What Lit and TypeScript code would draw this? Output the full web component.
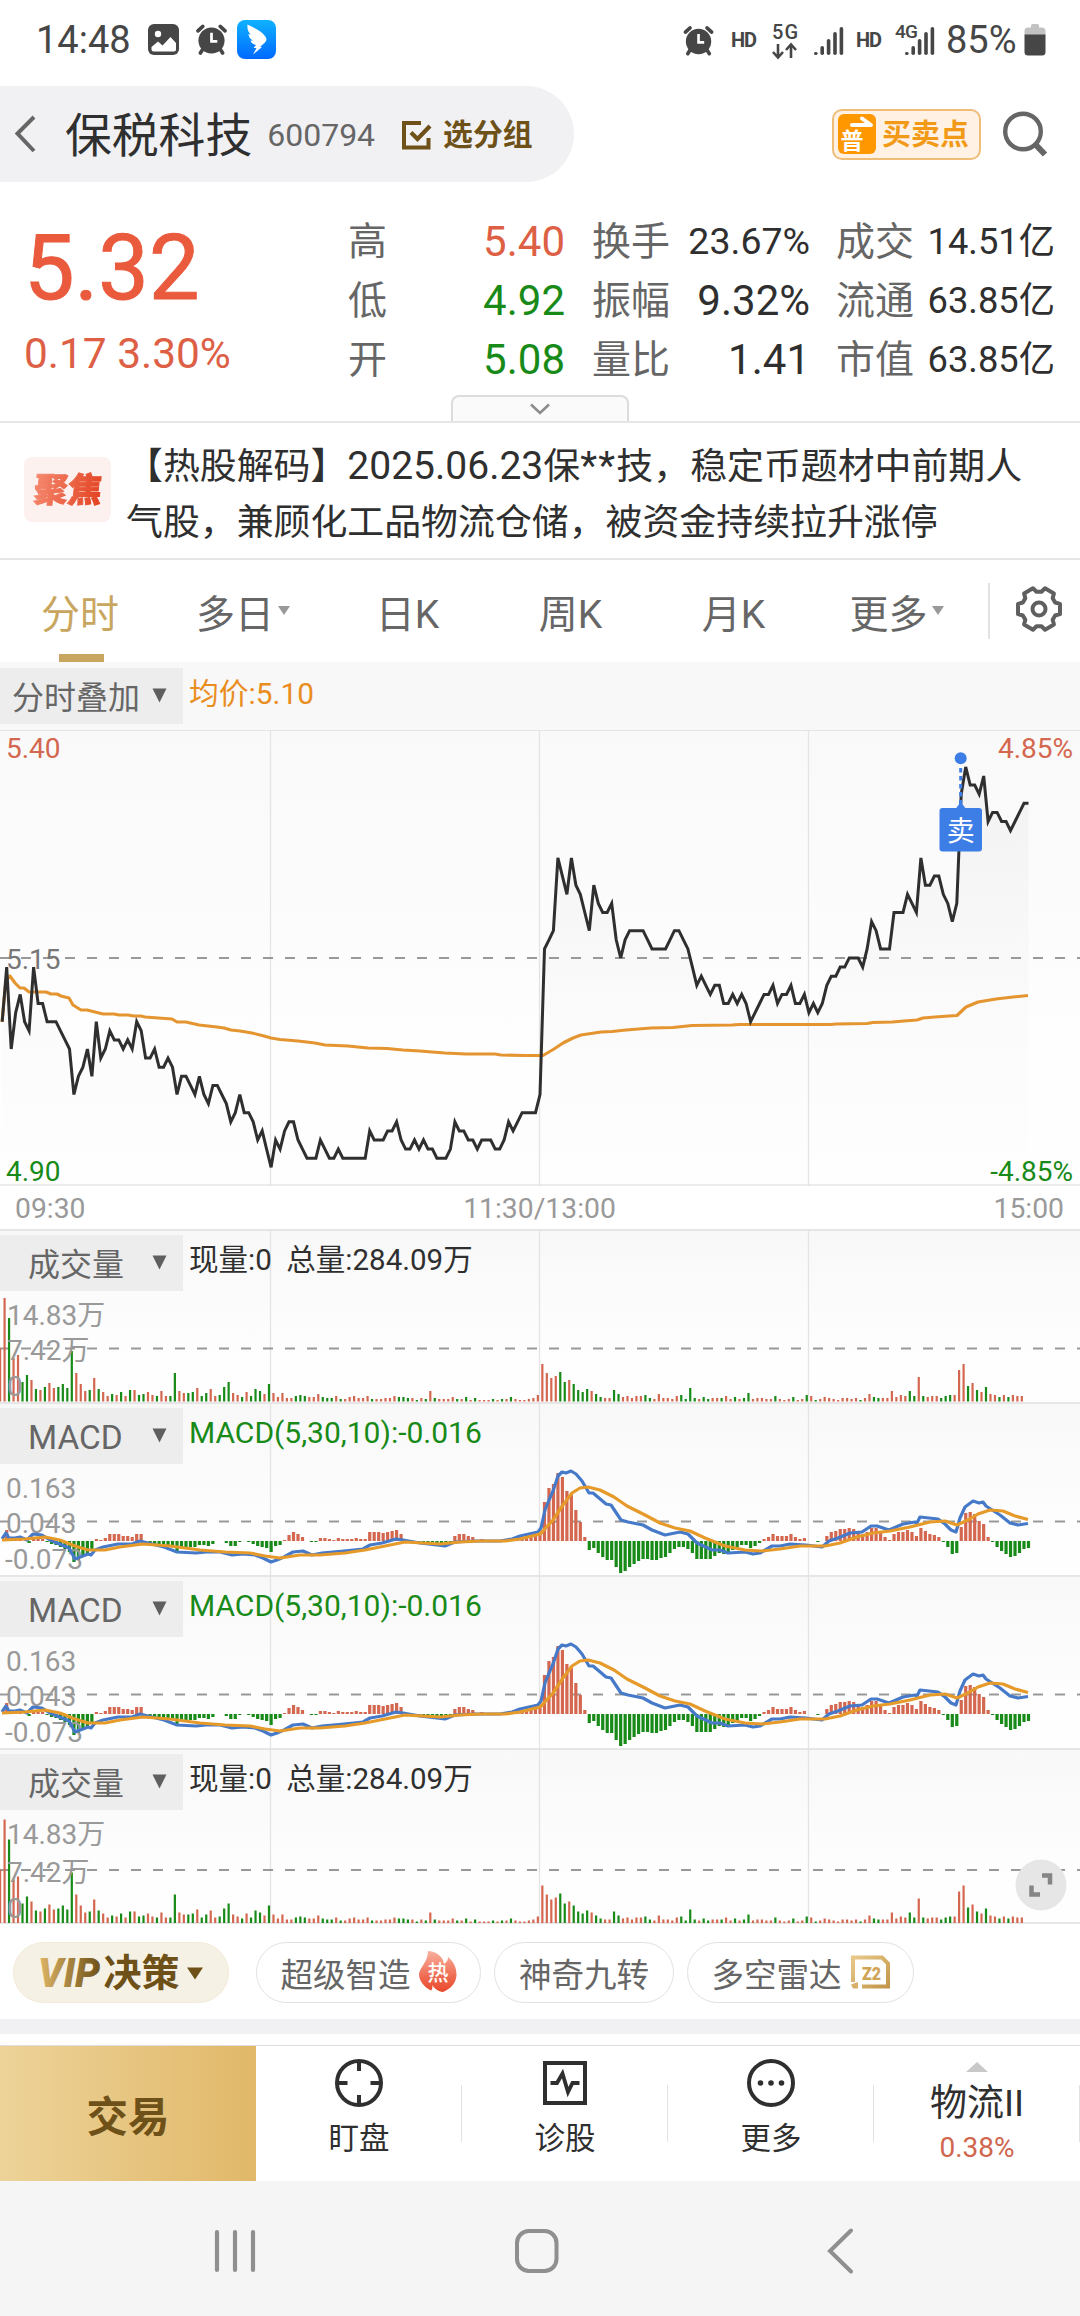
import { LitElement, html, css, svg } from "lit";
import { customElement, property } from "lit/decorators.js";

const SLOTS = 241;
const STEP = 1080 / SLOTS;
const GRID_X = [270.5, 539.5, 808.5];
const RED = "#d4674f";
const GREEN = "#188a18";

// Minute closes, in ticks of 0.01 from the previous close of 5.15.
const PRICE: number[] = [
  -7, -1, -10, -6, -4, -7, -8, -1, -5, -5, -7, -7, -7, -8, -9, -10, -15, -13, -12, -10,
  -13, -7, -11, -10, -8, -9, -9, -10, -9, -10, -7, -8, -11, -11, -10, -12, -12, -11, -12, -15,
  -13, -13, -14, -15, -13, -15, -16, -14, -14, -15, -16, -18, -17, -15, -17, -17, -18, -20, -19, -21,
  -23, -20, -21, -19, -18, -18, -20, -21, -22, -22, -22, -20, -21, -22, -22, -21, -22, -22, -22, -22,
  -22, -22, -19, -20, -20, -20, -19, -19, -18, -20, -21, -21, -20, -21, -20, -21, -21, -22, -22, -22,
  -21, -18, -19, -19, -20, -20, -21, -20, -20, -20, -21, -21, -20, -18, -19, -18, -17, -17, -17, -17,
  -15, 1, 2, 3, 11, 9, 7, 11, 8, 7, 5, 3, 8, 6, 5, 5, 6, 2, 0, 2,
  3, 3, 3, 3, 2, 1, 1, 1, 1, 2, 3, 3, 2, 1, -1, -3, -2, -3, -4, -3,
  -3, -5, -5, -4, -5, -4, -5, -7, -6, -5, -4, -4, -3, -5, -4, -4, -3, -5, -5, -4,
  -6, -5, -6, -5, -3, -2, -2, -1, -1, 0, 0, 0, -1, 1, 4, 3, 1, 1, 1, 5,
  5, 5, 7, 6, 5, 11, 8, 8, 9, 9, 7, 6, 4, 6, 18, 21, 19, 19, 18, 20,
  15, 16, 16, 15, 15, 14, 15, 16, 17, 17,
];

const AVERAGE =
  "2,292 6,250 10,246 15,253 20,258 24,258 29,262 46,262 51,264 57,264 61,266 69,268 73,275 81,280 87,280 103,284 114,284 119,285 128,285 134,286 141,286 145,287 172,289 177,292 186,292 199,295 217,297 224,298 231,300 240,301 252,303 264,306 271,308 280,309.5 298,311 315,313 325,315 348,316 368,318 387,318.5 403,320 420,321 432,322 445,323 466,324 495,324 501,325 525,325.5 543,325.5 554,319 563,313 573,308 581,305 601,302 612,301.5 626,300 651,298 673,297.5 692,295.5 732,295 739,294.5 831,294.5 836,294 867,293.5 873,292.5 892,292 904,291 917,290 923,288 935,287 949,286 957,285.5 966,277 978,272 996,269 1013,267 1028,265.5";

const VOLUME =
  "53r 103r 83g 43r 46r 19g 26g 21r 12g 11r 14g 18r 13r 14g 17g 13g 50g 28r 17r 10r 11g 23r 12g 9r 5r 7g 6r 9g 5r 11g 11r 6g 7g 9r 6r 5g 10r 5r 5g 28g 10r 8r 8g 9g 13r 5g 8g 12r 5r 6g 14g 19g 8r 6r 4g 9r 5g 12g 10g 7r 17g 8r 4r 8r 3r 3r 5g 6g 5g 4r 4r 7r 4g 3g 3g 5r 2g 2r 4r 5r 3r 3r 5r 2g 2r 2r 3r 3r 5r 4g 4g 3g 3r 1g 3r 2g 10r 3g 2r 2r 2r 4r 2g 2r 4g 1r 3g 1r 1r 1r 2g 1r 2g 2r 4g 2r 1r 1r 2r 3r 6r 37r 28r 23r 25r 29g 19g 21r 17g 11g 9g 12g 10r 7g 4g 3r 3r 11g 7g 4r 5r 3r 5r 5r 6g 3g 2r 7r 3r 3r 2r 5r 6g 2g 13g 3g 2r 4g 2g 3r 3r 3g 5r 2r 4g 2r 3g 8g 2r 3r 3r 2r 2r 5g 2r 1r 2r 4g 1r 2r 6g 5r 1g 2r 4r 3r 2r 1r 3r 3r 2r 3r 1g 3r 7r 4g 3g 3r 3r 10r 4r 6r 5r 10g 5g 24r 5g 4r 5r 5r 3g 5g 6g 6r 31r 37r 15g 18r 11g 9r 14g 7r 6r 4g 6r 4g 6r 5r 5r"
    .split(" ");

const HIST: number[] = [
  0, 11, 0, 1, 2, 0, -2, 4, 3, 2, -1, -3, -4, -6, -8, -11, -21, -19, -16, -12,
  -8, 2, 1, 3, 7, 7, 7, 5, 5, 4, 7, 7, 0, -2, -3, -5, -5, -5, -5, -11,
  -7, -6, -6, -6, -4, -4, -5, -3, 0, 0, -2, -5, -5, -1, 0, -1, -3, -5, -6, -7,
  -11, -5, -4, 1, 6, 9, 7, 4, 0, -1, -1, 3, 3, 2, 1, 3, 2, 2, 2, 3,
  2, 2, 9, 9, 9, 8, 9, 10, 11, 7, 1, 0, -1, -1, -1, -1, -1, -2, -2, -2,
  -1, 5, 7, 7, 5, 4, 1, 2, 1, 1, 0, 0, 0, 0, 1, 2, 4, 4, 5, 6,
  8, 39, 53, 57, 68, 64, 50, 46, 31, 19, 4, -9, -7, -12, -16, -19, -19, -26, -32, -30,
  -26, -23, -20, -18, -18, -19, -19, -17, -16, -12, -8, -6, -6, -8, -12, -18, -18, -18, -18, -15,
  -12, -13, -11, -9, -7, -4, -4, -7, -5, -2, 2, 4, 7, 5, 5, 5, 7, 4, 2, 3,
  0, 0, -1, 0, 5, 9, 10, 12, 12, 13, 12, 9, 7, 9, 13, 13, 8, 4, 1, 7,
  9, 9, 11, 9, 5, 13, 10, 7, 6, 4, -1, -6, -13, -12, 14, 28, 29, 27, 20, 17,
  4, -1, -6, -10, -13, -16, -15, -12, -8, -7,
];

const DIF =
  "2,137 6,131 9,136 15,136 20,135 27,138 33,132 42,133 50,138 62,143 69,146 75,157 83,154 88,152 91,153 95,148 103,145 118,142 132,142 140,139 152,142 164,145 177,150 196,151 206,150 220,150 232,153 243,152 255,153 263,156 271,160 277,158 284,155 293,150 303,149 312,153 322,151 344,149 363,147 370,143 382,141 396,137 403,138 420,141 445,144 455,140 475,139 500,139 512,137 520,134 538,130 541,126 545,108 549,98 553,89 558,74 562,70 566,71 571,69 576,72 582,79 589,91 593,91 599,96 606,102 611,103 621,118 628,120 643,123 652,128 665,133 680,130 688,132 697,141 712,148 720,148 728,151 745,150 753,152 760,151 772,144 780,144 790,142 806,143 822,145 829,139 838,136 850,131 862,130 865,128 871,124 877,124 889,128 903,122 915,120 917,121 920,115 938,117 945,122 951,128 956,130 960,116 965,105 973,99 979,101 983,100 986,104 1000,113 1010,121 1018,123 1028,121.5";

const DEA =
  "2,138 25,137 45,135 60,138 75,144 88,148 105,148 120,145 143,142 170,144 200,148 225,150 250,151 265,154 280,156 300,153 320,153 345,151 365,148 385,144 405,140 440,142 460,140 480,139 505,139 520,137 540,132 543,129 553,118 563,103 572,91 580,86 588,85 600,88 614,95 627,104 645,113 660,121 675,126 690,129 705,136 725,144 745,148 762,149 780,147 800,144 825,144 840,141 857,135 873,131 890,129 910,125 930,120 945,119 957,123 968,118 978,112 990,108 1003,109 1015,114 1028,117.5";

const vGrid = (h: number) =>
  GRID_X.map((x) => svg`<line x1=${x} x2=${x} y1="0" y2=${h} stroke="#e4e4e4" stroke-width="1.3"/>`);
const dashes = (y: number) =>
  svg`<line x1="-1" x2="1080" y1=${y} y2=${y} stroke="#999" stroke-width="2" stroke-dasharray="10 12"/>`;
const label = (x: number, cy: number, text: string, fill: string, anchor = "start") =>
  svg`<text x=${x} y=${cy + 9.5} fill=${fill} text-anchor=${anchor}>${text}</text>`;

const FONT = css`
  :host {
    font-family: Roboto, "Noto Sans CJK SC", sans-serif;
  }
  svg {
    display: block;
    overflow: visible;
  }
  svg text {
    font-family: Roboto, "Noto Sans CJK SC", sans-serif;
  }
`;

@customElement("status-bar")
class StatusBar extends LitElement {
  static styles = [FONT, css`
    :host {
      display: flex;
      align-items: center;
      box-sizing: border-box;
      height: 78px;
      padding: 1px 34px 0 36px;
      color: #464646;
      font-size: 38px;
    }
    .image { margin-left: 17px; }
    .alarm { margin-left: 17px; }
    .wing { margin-left: 10px; }
    .cluster { margin-left: auto; }
    .percent { margin-left: 12px; width: 71px; }
    .battery { margin-left: 7px; }
  `];

  private alarm() {
    return svg`
      <circle cx="16" cy="17" r="13.5" fill="#464646"/>
      <path d="M2 7L7 2.5M30 7L25 2.5M7 26L4.5 30M25 26L27.5 30" stroke="#464646" stroke-width="3.8" stroke-linecap="round"/>
      <path d="M16 9V18H22" fill="none" stroke="#fff" stroke-width="2.8"/>`;
  }

  private signal(x: number) {
    return [3, 9, 16, 23, 28].map(
      (h, i) => svg`<rect x=${x + i * 6.4} y=${54 - h} width="3.6" height=${h} rx="1.8"/>`,
    );
  }

  render() {
    return html`
      <span>14:48</span>
      <svg class="image" width="31" height="31" viewBox="0 0 31 31">
        <rect width="31" height="31" rx="6" fill="#464646"/>
        <circle cx="10" cy="10" r="3.2" fill="#fff"/>
        <path d="M3.5 23L10 17.5L14.5 21.5L22.5 13L28 19V25.5Q28 27.5 26 27.5H5.5Q3.5 27.5 3.5 25.5Z" fill="#fff"/>
      </svg>
      <svg class="alarm" width="31" height="31" viewBox="0 0 32 32">${this.alarm()}</svg>
      <svg class="wing" width="39" height="39" viewBox="0 0 39 39">
        <defs><linearGradient id="w" x2="0" y2="1"><stop stop-color="#0fb2ff"/><stop offset="1" stop-color="#0069ff"/></linearGradient></defs>
        <rect width="39" height="39" rx="8" fill="url(#w)"/>
        <path d="M10.5 4.500C16 7.500 24 10.500 27.500 15.500C30 18.500 30 20 28 22.500L23 27H25L16 34.500L19.500 28H16.500L19 25C15.500 24.500 14 22.500 13.500 20.500L16 20.500C13 19 11.500 16.500 11.500 14L14 14.500C11 12 10 8.500 10.500 4.500Z" fill="#fff"/>
      </svg>
      <svg class="cluster" width="250" height="78" viewBox="684 0 250 78" fill="#464646">
        <g transform="translate(683.5 24.5) scale(.94)">${this.alarm()}</g>
        <text x="731" y="46" font-size="20" font-weight="700" textLength="26">HD</text>
        <text x="772" y="38" font-size="20" font-weight="500" textLength="26">5G</text>
        <path d="M778 43V56M773 51L778 56.5L783 51M791 57V44M786 49L791 43.5L796 49" fill="none" stroke="#464646" stroke-width="2.6"/>
        ${this.signal(814)}
        <text x="856" y="46" font-size="20" font-weight="700" textLength="26">HD</text>
        <text x="895" y="37" font-size="19" font-weight="500" textLength="23">4G</text>
        ${this.signal(905)}
      </svg>
      <span class="percent">85%</span>
      <svg class="battery" width="22" height="32" viewBox="0 0 22 32">
        <path d="M7 1.5Q7 0 8.500 0H13.500Q15 0 15 1.500V3.500H18Q21.500 3.500 21.500 7V11H.5V7Q.5 3.500 4 3.500H7Z" fill="#c2c2c2"/>
        <path d="M.5 10.5H21.500V28Q21.500 31.500 18 31.500H4Q.5 31.500 .5 28Z" fill="#464646"/>
      </svg>`;
  }
}

@customElement("stock-header")
class StockHeader extends LitElement {
  static styles = [FONT, css`
    :host {
      display: flex;
      align-items: center;
      height: 112px;
    }
    .pill {
      display: flex;
      align-items: center;
      box-sizing: border-box;
      width: 574px;
      height: 96px;
      padding-left: 12px;
      border-radius: 0 48px 48px 0;
      background: #f1f1f4;
    }
    .name { margin: 3px 0 0 28px; font-size: 46.800px; color: #2f2f2f; line-height: 60px; }
    .code { margin: 1px 0 0 15px; font-size: 32px; color: #666; }
    .check { margin: 3px 11px 0 27px; }
    .group { margin-top: 2px; font-size: 29.800px; font-weight: 700; color: #6e5118; line-height: 40px; }
    .badge {
      display: flex;
      align-items: center;
      box-sizing: border-box;
      width: 149px;
      height: 51px;
      margin-left: 258px;
      padding-left: 4px;
      border: 2px solid #eebd78;
      border-radius: 10px;
      background: #fff2e4;
      color: #f29a17;
      font-size: 29px;
      font-weight: 700;
    }
    .badge span { margin: 2px 0 0 6px; line-height: 40px; }
    .search { margin-left: 20px; }
  `];

  render() {
    return html`
      <div class="pill">
        <svg width="25" height="40" viewBox="0 0 25 40"><path d="M22 3L5.5 19.5L22 37" fill="none" stroke="#666" stroke-width="4"/></svg>
        <span class="name">保税科技</span>
        <span class="code">600794</span>
        <svg class="check" width="30" height="29" viewBox="0 0 30 29" fill="none" stroke="#6e5118">
          <path d="M19 2H2V26.5H26.5V17" stroke-width="4"/>
          <path d="M9 11.5L15.5 18L28 5" stroke-width="4.2"/>
        </svg>
        <span class="group">选分组</span>
      </div>
      <div class="badge">
        <svg width="38" height="40" viewBox="0 0 38 40">
          <rect width="38" height="40" rx="6" fill="#ff9800"/>
          <path d="M14 11H33L24 4.5" fill="none" stroke="#fff" stroke-width="4" stroke-linejoin="round" stroke-linecap="round"/>
          <text x="2.5" y="35" font-size="23" font-weight="700" fill="#fff">普</text>
        </svg>
        <span>买卖点</span>
      </div>
      <svg class="search" width="48" height="48" viewBox="0 0 48 48" fill="none" stroke="#666">
        <circle cx="22" cy="21.5" r="17.8" stroke-width="4.4"/>
        <path d="M34 34L44 44.5" stroke-width="6"/>
      </svg>`;
  }
}

@customElement("quote-summary")
class QuoteSummary extends LitElement {
  static styles = [FONT, css`
    :host {
      display: flex;
      position: relative;
      box-sizing: border-box;
      height: 233px;
      padding-top: 22px;
      border-bottom: 2px solid #e6e6e6;
    }
    .left { width: 348px; color: #ea5a3d; }
    .last { padding: 13px 0 0 24px; font-size: 90px; line-height: 88px; -webkit-text-stroke: 1px #ea5a3d; }
    .change { padding: 15px 0 0 24px; font-size: 42.400px; line-height: 52px; color: #dd6045; white-space: nowrap; }
    .stats {
      display: grid;
      grid-template-columns: 38px 179px 105px 140px 104px 141px;
      grid-auto-rows: 59px;
      align-items: center;
      line-height: 59px;
      font-size: 42px;
      color: #2f2f2f;
    }
    .stats span { white-space: nowrap; }
    .k { font-size: 39px; color: #666; text-align: right; padding-top: 1px; }
    .v { text-align: right; }
    .up { color: #dd6045; }
    .down { color: #188a18; }
    .mid { font-size: 37.500px; }
    .small { font-size: 36.300px; }
    .toggle {
      position: absolute;
      left: 451px;
      bottom: 0;
      display: flex;
      align-items: center;
      justify-content: center;
      box-sizing: border-box;
      width: 178px;
      height: 26px;
      border: 2px solid #dcdcdc;
      border-bottom: 0;
      border-radius: 8px 8px 0 0;
      background: #fafafa;
    }
  `];

  private rows = [
    ["高", "5.40", "up", "换手", "23.67%", "mid", "成交", "14.51亿"],
    ["低", "4.92", "down", "振幅", "9.32%", "", "流通", "63.85亿"],
    ["开", "5.08", "down", "量比", "1.41", "", "市值", "63.85亿"],
  ];

  render() {
    return html`
      <div class="left">
        <div class="last">5.32</div>
        <div class="change">0.17 3.30%</div>
      </div>
      <div class="stats">
        ${this.rows.map((r) => html`
          <span class="k">${r[0]}</span><span class="v ${r[2]}">${r[1]}</span>
          <span class="k">${r[3]}</span><span class="v ${r[5]}">${r[4]}</span>
          <span class="k">${r[6]}</span><span class="v small">${r[7]}</span>`)}
      </div>
      <div class="toggle">
        <svg width="22" height="12" viewBox="0 0 22 12"><path d="M2 1.5L11 10L20 1.5" fill="none" stroke="#8c8c8c" stroke-width="2.6"/></svg>
      </div>`;
  }
}

@customElement("news-line")
class NewsLine extends LitElement {
  static styles = [FONT, css`
    :host {
      display: flex;
      box-sizing: border-box;
      height: 137px;
      padding: 16px 0 0 24px;
      border-bottom: 2px solid #e6e6e6;
    }
    .tag {
      display: grid;
      place-items: center;
      width: 87px;
      height: 65px;
      margin: 18px 15px 0 0;
      border-radius: 8px;
      background: #fdf1ef;
    }
    .tag span {
      font-size: 34px;
      font-weight: 900;
      line-height: 44px;
      transform: skewX(-6deg);
      background: linear-gradient(100deg, #f58a70, #e2401f);
      -webkit-background-clip: text;
      color: transparent;
      -webkit-text-stroke: 1px transparent;
    }
    .text { font-size: 36.900px; line-height: 56px; color: #2f2f2f; white-space: nowrap; }
    .date { font-size: 39px; line-height: 1; }
    .mask { font-size: 39px; line-height: 1; letter-spacing: 1.300px; }
  `];

  render() {
    return html`
      <div class="tag"><span>聚焦</span></div>
      <div class="text">【热股解码】<span class="date">2025.06.23</span>保<span class="mask">**</span>技，稳定币题材中前期人<br>气股，兼顾化工品物流仓储，被资金持续拉升涨停</div>`;
  }
}

@customElement("period-tabs")
class PeriodTabs extends LitElement {
  static styles = [FONT, css`
    :host { display: flex; height: 102px; background: #fff; }
    .tab {
      display: flex;
      align-items: center;
      justify-content: center;
      position: relative;
      width: 163px;
      height: 102px;
      padding-bottom: 1px;
      box-sizing: border-box;
      font-size: 39px;
      color: #666;
    }
    .tab svg { margin: 0 0 0 4px; }
    .active { color: #c9a660; }
    .tab:nth-child(-n + 2) { padding-right: 3px; }
    .active::after {
      content: "";
      position: absolute;
      left: 59px;
      top: 94px;
      width: 45px;
      height: 8px;
      background: #c9a660;
    }
    .settings {
      display: flex;
      align-items: center;
      box-sizing: border-box;
      height: 56px;
      margin: 23px 0 0 10px;
      padding: 0 0 5px 25px;
      border-left: 2px solid #e2e2e2;
    }
  `];

  private gear() {
    const pts: string[] = [];
    for (let i = 0; i < 6; i++) {
      const a = (i * Math.PI) / 3;
      for (const [d, r] of [[-0.38, 17.4], [-0.24, 21.6], [0.24, 21.6], [0.38, 17.4]]) {
        pts.push(`${(24 + r * Math.cos(a + d)).toFixed(2)},${(24 + r * Math.sin(a + d)).toFixed(2)}`);
      }
    }
    return pts.join(" ");
  }

  render() {
    const tabs = ["分时", "多日", "日K", "周K", "月K", "更多"];
    return html`
      ${tabs.map((t, i) => html`<div class="tab ${i === 0 ? "active" : ""}">${t}${i === 1 || i === 5
        ? html`<svg width="12" height="9" viewBox="0 0 12 9"><path d="M0 0H12L6 9Z" fill="#999"/></svg>`
        : ""}</div>`)}
      <div class="settings">
        <svg width="48" height="48" viewBox="0 0 48 48" fill="none" stroke="#5f5f5f" stroke-width="4" stroke-linejoin="round">
          <polygon points=${this.gear()}/>
          <circle cx="24" cy="24" r="6.5"/>
        </svg>
      </div>`;
  }
}

const PANEL_HEAD = css`
  .head { display: flex; position: relative; }
  .pick {
    display: flex;
    align-items: center;
    justify-content: space-between;
    box-sizing: border-box;
    width: 183px;
    height: 56px;
    padding: 0 16px 0 28px;
    background: #ededed;
    color: #666;
    font-size: 32px;
  }
  .pick svg { margin-top: -2px; }
  .info { margin-left: 6px; font-size: 29.500px; line-height: 50px; white-space: pre; }
`;

const caret = html`<svg width="15" height="15" viewBox="0 0 15 15"><path d="M.5 .5H14.5L7.5 14.5Z" fill="#5f5f5f"/></svg>`;

@customElement("price-panel")
class PricePanel extends LitElement {
  static styles = [FONT, PANEL_HEAD, css`
    :host { display: flex; flex-direction: column; background: #f8f8f8; }
    .head { box-sizing: border-box; height: 68px; padding-top: 6px; }
    .pick { padding-left: 12px; }
    .pick span { margin-bottom: 2px; }
    .info { color: #ea8d1f; font-size: 29.800px; line-height: 51px; }
    .plot { height: 456px; background: linear-gradient(#f9f9f9, #fefefe 70%); border-bottom: 2px solid #ececec; box-sizing: border-box; }
    .plot text { font-size: 28px; }
    .times {
      display: grid;
      grid-template-columns: 1fr 1fr 1fr;
      height: 43px;
      padding: 0 16px 0 15px;
      background: #fff;
      color: #999;
      font-size: 28.300px;
      line-height: 46px;
    }
    .noon { text-align: center; }
    .close { text-align: right; }
  `];

  render() {
    const line = PRICE.map((p, i) => `${((i + 0.5) * STEP).toFixed(1)},${(228 - p * 9.1).toFixed(1)}`).join(" ");
    return html`
      <div class="head"><div class="pick"><span>分时叠加</span>${caret}</div><div class="info">均价:5.10</div></div>
      <div class="plot">
        <svg width="1080" height="456" viewBox="0 0 1080 456">
          <defs><linearGradient id="f" x2="0" y2="1"><stop stop-color="#000" stop-opacity=".03"/><stop offset="1" stop-color="#000" stop-opacity="0"/></linearGradient></defs>
          <line x2="1080" y1=".5" y2=".5" stroke="#e4e4e4"/>
          <polygon points="2,455 ${line} 1028.400,455" fill="url(#f)"/>
          ${vGrid(456)}
          ${dashes(228)}
          ${label(6, 18.5, "5.40", RED)}
          ${label(1073, 18.5, "4.85%", RED, "end")}
          ${label(6, 229.5, "5.15", "#777")}
          ${label(6, 441.5, "4.90", GREEN)}
          ${label(1073, 441.5, "-4.85%", GREEN, "end")}
          <polyline points=${AVERAGE} fill="none" stroke="#e59530" stroke-width="3.1" stroke-linejoin="round"/>
          <polyline points=${line} fill="none" stroke="#2f2f2f" stroke-width="3"/>
          <path d="M960.700 38V76" stroke="#3d7de6" stroke-width="3" stroke-dasharray="4.5 3.5"/>
          <circle cx="960.7" cy="28.3" r="6" fill="#3d7de6"/>
          <path d="M955.5 79L960.7 72L966 79Z" fill="#3d7de6"/>
          <rect x="939.5" y="78" width="42.5" height="43.5" rx="3" fill="#3d7de6"/>
          <text x="946.7" y="110.5" fill="#fff">卖</text>
        </svg>
      </div>
      <div class="times"><span>09:30</span><span class="noon">11:30/13:00</span><span class="close">15:00</span></div>`;
  }
}

@customElement("indicator-panel")
class IndicatorPanel extends LitElement {
  static styles = [FONT, PANEL_HEAD, css`
    :host {
      display: block;
      position: relative;
      box-sizing: border-box;
      height: 173px;
      padding-top: 4px;
      border-top: 2px solid #e6e6e6;
      background: linear-gradient(#f8f8f8, #fefefe 75%);
    }
    :host([tall]) { height: 176px; border-bottom: 2px solid #e6e6e6; }
    .chart { position: absolute; left: 0; top: -2px; }
    .chart text { font-size: 28px; }
    .volume { color: #2f2f2f; }
    .macd { color: #188a18; font-size: 30px; }
    .pick span { margin-bottom: 3px; }
    .latin { font-size: 33.400px; }
    .latin span { margin-bottom: -3px; }
  `];

  @property() kind = "volume";
  @property({ type: Boolean, reflect: true }) tall = false;

  private volume() {
    const base = this.tall ? 175 : 172.5;
    const mid = this.tall ? 122 : 119.5;
    return svg`${vGrid(base)}${dashes(mid)}
      ${VOLUME.map((v, i) => {
        const h = parseInt(v) + 0.5;
        return svg`<rect x=${i * STEP - 1} y=${base - h} width="2.2" height=${h} fill=${v.endsWith("r") ? RED : GREEN}/>`;
      })}
      ${label(7, 86.5, "14.83万", "#999")}
      ${label(7, mid + 2, "7.42万", "#999")}
      ${label(7, this.tall ? 160 : 157.5, "0", "#999")}`;
  }

  private macd() {
    return svg`${vGrid(173)}${dashes(119.5)}
      ${HIST.map((v, i) => v === 0 ? "" : svg`<rect x=${(i + 0.5) * STEP - 1.6} y=${v > 0 ? 139 - v : 139} width="3.2" height=${Math.abs(v)} fill=${v > 0 ? RED : GREEN}/>`)}
      ${label(6, 86.5, "0.163", "#999")}
      ${label(6, 121.5, "0.043", "#999")}
      ${label(5, 157.5, "-0.073", "#999")}
      <polyline points=${DIF} fill="none" stroke="#4679c8" stroke-width="3.200" stroke-linejoin="round"/>
      <polyline points=${DEA} fill="none" stroke="#e59a2a" stroke-width="3.200" stroke-linejoin="round"/>`;
  }

  render() {
    const vol = this.kind === "volume";
    return html`
      <svg class="chart" width="1080" height="173" viewBox="0 0 1080 173">${vol ? this.volume() : this.macd()}</svg>
      <div class="head">
        <div class="pick ${vol ? "" : "latin"}"><span>${vol ? "成交量" : "MACD"}</span>${caret}</div>
        <div class="info ${this.kind}">${vol ? "现量:0  总量:284.09万" : "MACD(5,30,10):-0.016"}</div>
      </div>`;
  }
}

@customElement("strategy-chips")
class StrategyChips extends LitElement {
  static styles = [FONT, css`
    :host {
      display: flex;
      box-sizing: border-box;
      height: 95px;
      padding: 18px 0 0 13px;
      background: #fff;
    }
    .chip {
      display: flex;
      align-items: center;
      justify-content: center;
      box-sizing: border-box;
      height: 61px;
      margin-right: 13px;
      padding-bottom: 1px;
      border: 1.500px solid #e2e2e2;
      border-radius: 31px;
      color: #666;
      font-size: 32.500px;
      white-space: nowrap;
    }
    .vip { width: 216px; margin-right: 27px; border-color: #f3ead8; background: #f6f1e5; }
    .hot { width: 225px; }
    .nine { width: 180px; }
    .radar { width: 227px; }
    .flame { margin-left: 8px; }
    .level { margin-left: 9px; }
  `];

  render() {
    return html`
      <div class="chip vip">
        <svg width="170" height="50" viewBox="0 0 170 50">
          <defs><linearGradient id="v"><stop stop-color="#e0b768"/><stop offset="1" stop-color="#6e5118"/></linearGradient></defs>
          <text x="2" y="40" font-size="40" font-weight="900" font-style="italic" textLength="62" lengthAdjust="spacingAndGlyphs" fill="url(#v)">VIP</text>
          <text x="67.5" y="39" font-size="38" font-weight="700" fill="#6e5118">决策</text>
          <path d="M151 20.5H167L159 32.5Z" fill="#6e5118"/>
        </svg>
      </div>
      <div class="chip hot">超级智造
        <svg class="flame" width="38" height="42" viewBox="0 0 38 42">
          <defs><linearGradient id="h" x2="0" y2="1"><stop stop-color="#f9b09f"/><stop offset=".6" stop-color="#ef6e54"/><stop offset="1" stop-color="#e9472a"/></linearGradient></defs>
          <path d="M9 0C20 1 24 7 25 13C28 11 29 9 29 6C35 11 37.5 17 37.500 24C37 33 31 38 24 41C19 40.500 16 38 13 34C14 37 13 39 12 39.500C5 36 0 30 0 23C1 16 9 11 9 0Z" fill="url(#h)"/>
          <text x="8.5" y="29" font-size="21" font-weight="500" fill="#fff">热</text>
        </svg>
      </div>
      <div class="chip nine">神奇九转</div>
      <div class="chip radar">多空雷达
        <svg class="level" width="39" height="34" viewBox="0 0 39 34">
          <defs><linearGradient id="l" x2="1" y2="1"><stop stop-color="#e8c98a"/><stop offset="1" stop-color="#c3964a"/></linearGradient></defs>
          <path d="M2 27V2.500H31L37 8.500V31.500H11" fill="none" stroke="url(#l)" stroke-width="4"/>
          <path d="M0 29.5L7 27V33.500H2Z" fill="#d8b069"/>
          <text x="11" y="24.500" font-size="19" font-weight="900" fill="#d0a457" textLength="19" lengthAdjust="spacingAndGlyphs">Z2</text>
        </svg>
      </div>`;
  }
}

@customElement("action-bar")
class ActionBar extends LitElement {
  static styles = [FONT, css`
    :host {
      display: flex;
      box-sizing: border-box;
      height: 162px;
      border-top: 15px solid #f1f1f3;
      background: #fff;
    }
    .row { display: flex; flex: 1; margin-top: 11px; border-top: 1px solid #dedede; }
    .trade {
      display: grid;
      place-items: center;
      width: 256px;
      background: linear-gradient(90deg, #edd399, #e1b869);
      color: #6e5118;
      font-size: 41.500px;
      font-weight: 700;
    }
    .cell {
      display: flex;
      flex-direction: column;
      align-items: center;
      position: relative;
      flex: 1;
      padding-top: 12px;
      font-size: 30.500px;
      line-height: 40px;
      color: #2f2f2f;
    }
    .cell::after {
      content: "";
      position: absolute;
      right: 0;
      top: 39px;
      width: 1px;
      height: 57px;
      background: #e2e2e2;
    }
    .cell svg { margin-bottom: 11px; }
    .cell .up { margin: 4px 0 8px; }
    .sector { font-size: 37px; line-height: 48px; }
    .rate { font-size: 28px; line-height: 36px; margin-top: 2px; color: #cf664e; }
  `];

  render() {
    return html`
      <div class="row">
        <div class="trade">交易</div>
        <div class="cell">
          <svg width="50" height="50" viewBox="0 0 50 50" fill="none" stroke="#2f2f2f" stroke-width="4">
            <circle cx="25" cy="25" r="22"/><path d="M25 3V13M25 37V47M3 25H13.5M36.5 25H47"/>
          </svg>盯盘
        </div>
        <div class="cell">
          <svg width="50" height="50" viewBox="0 0 50 50" fill="none" stroke="#2f2f2f" stroke-width="4">
            <path d="M5 5H45V45H5Z"/><path d="M10.5 25H17L22.5 15.5L28 34L32.5 25H39.5" stroke-width="3.8"/>
          </svg>诊股
        </div>
        <div class="cell">
          <svg width="50" height="50" viewBox="0 0 50 50" fill="#2f2f2f">
            <circle cx="25" cy="25" r="22" fill="none" stroke="#2f2f2f" stroke-width="4"/>
            <circle cx="14.5" cy="25" r="2.8"/><circle cx="25" cy="25" r="2.8"/><circle cx="35.5" cy="25" r="2.8"/>
          </svg>更多
        </div>
        <div class="cell">
          <svg class="up" width="22" height="10" viewBox="0 0 22 10"><path d="M0 10L11 0L22 10Z" fill="#c8c8c8"/></svg>
          <span class="sector">物流II</span>
          <span class="rate">0.38%</span>
        </div>
      </div>`;
  }
}

@customElement("app-root")
class AppRoot extends LitElement {
  static styles = [FONT, css`
    :host {
      display: flex;
      flex-direction: column;
      position: relative;
      width: 1080px;
      height: 2316px;
      overflow: hidden;
      background: #fff;
    }
    .expand { position: absolute; left: 1015px; top: 1859px; }
    .nav { display: flex; align-items: center; flex: 1; background: #f5f5f5; }
    .recents { margin: 5px 0 0 214px; }
    .home { margin: 5px 0 0 258px; }
    .back { margin: 5px 0 0 265px; }
  `];

  render() {
    return html`
      <status-bar></status-bar>
      <stock-header></stock-header>
      <quote-summary></quote-summary>
      <news-line></news-line>
      <period-tabs></period-tabs>
      <price-panel></price-panel>
      <indicator-panel kind="volume"></indicator-panel>
      <indicator-panel kind="macd"></indicator-panel>
      <indicator-panel kind="macd"></indicator-panel>
      <indicator-panel kind="volume" tall></indicator-panel>
      <strategy-chips></strategy-chips>
      <action-bar></action-bar>
      <div class="nav">
        <svg class="recents" width="42" height="46" viewBox="0 0 42 46" stroke="#8f8f8f" stroke-width="4.2" stroke-linecap="round">
          <path d="M3 4V42M21 4V42M39 4V42"/>
        </svg>
        <svg class="home" width="46" height="46" viewBox="0 0 46 46"><rect x="3" y="3" width="39.5" height="40" rx="12" fill="none" stroke="#8f8f8f" stroke-width="4"/></svg>
        <svg class="back" width="30" height="46" viewBox="0 0 30 46"><path d="M26 2.5L5 23L26 43.5" fill="none" stroke="#8f8f8f" stroke-width="4" stroke-linecap="round"/></svg>
      </div>
      <svg class="expand" width="52" height="52" viewBox="0 0 52 52">
        <circle cx="26" cy="26" r="25.5" fill="#e6e6e6"/>
        <path d="M27 16.5H35V25.5M25 35.5H16.5V26.5" fill="none" stroke="#858585" stroke-width="4.5"/>
      </svg>`;
  }
}
